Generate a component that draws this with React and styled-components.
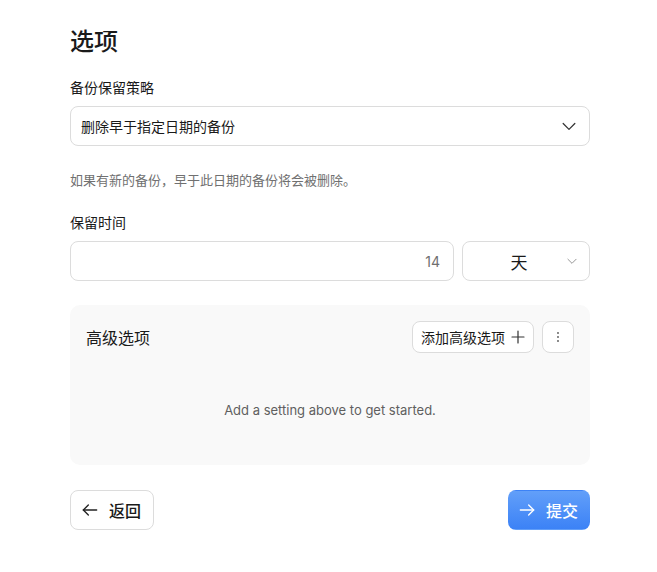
import React from "react";
import styled, { createGlobalStyle } from "styled-components";

const GlobalStyle = createGlobalStyle`
  body {
    margin: 0;
    background: #ffffff;
    font-family: Inter, "Noto Sans CJK SC", sans-serif;
    color: #1a1a1a;
  }
`;

const Page = styled.div`
  width: 520px;
  padding: 26px 0 40px 70px;
  display: flex;
  flex-direction: column;
`;

const Title = styled.h1`
  margin: 0 0 20px;
  font-size: 24px;
  line-height: 32px;
  font-weight: 500;
`;

const Label = styled.div`
  font-size: 14px;
  line-height: 20px;
  font-weight: 400;
  margin-bottom: 8px;
`;

const Field = styled.div`
  box-sizing: border-box;
  height: 40px;
  border: 1px solid #dcdcdc;
  border-radius: 8px;
  background: #fff;
  display: flex;
  align-items: center;
  padding: 0 ${p => p.$pad || 12}px;
  font-size: 14px;
  justify-content: ${p => p.$justify || "space-between"};
  flex: ${p => p.$flex || "none"};
  width: ${p => p.$width || "auto"};
`;

const Help = styled.p`
  margin: 24px 0 23px;
  font-size: 13px;
  line-height: 20px;
  color: #707070;
`;

const Row = styled.div`
  display: flex;
  gap: 8px;
`;

const NumberText = styled.span`
  color: #6f6f6f;
  font-size: 14px;
`;

const UnitText = styled.span`
  flex: 1;
  text-align: center;
  font-size: 17px;
`;

const Panel = styled.section`
  margin-top: 24px;
  background: #f9f9f9;
  border-radius: 10px;
  padding: 16px;
  height: 160px;
  box-sizing: border-box;
  display: flex;
  flex-direction: column;
`;

const PanelHead = styled.div`
  display: flex;
  align-items: center;
  justify-content: space-between;
`;

const PanelTitle = styled.div`
  font-size: 16px;
  font-weight: 400;
`;

const Tools = styled.div`
  display: flex;
  gap: 8px;
`;

const SmallButton = styled.button`
  box-sizing: border-box;
  height: 32px;
  min-width: 32px;
  padding: 0 ${p => (p.$icon ? 0 : 8)}px;
  border: 1px solid #dcdcdc;
  border-radius: 8px;
  background: #fff;
  font-family: inherit;
  font-size: 14px;
  color: #1a1a1a;
  display: flex;
  align-items: center;
  justify-content: center;
  gap: 6px;
`;

const Empty = styled.div`
  flex: 1;
  display: flex;
  align-items: center;
  justify-content: center;
  font-size: 13px;
  color: #5f5f5f;
  padding-top: 18px;
`;

const Footer = styled.div`
  margin-top: 25px;
  display: flex;
  justify-content: space-between;
`;

const NavButton = styled.button`
  box-sizing: border-box;
  height: 40px;
  padding: 0 ${p => (p.$primary ? 11 : 12)}px 0 ${p => (p.$primary ? 8 : 9)}px;
  border-radius: 8px;
  border: 1px solid ${p => (p.$primary ? "transparent" : "#dcdcdc")};
  background: ${p => (p.$primary ? "linear-gradient(#629ff9, #3c82f6)" : "#fff")};
  color: ${p => (p.$primary ? "#fff" : "#1a1a1a")};
  font-family: inherit;
  font-size: 16px;
  font-weight: 500;
  display: flex;
  align-items: center;
  gap: 9px;
`;

const Chevron = ({ size = 18, color = "#333" }) => (
  <svg width={size} height={size} viewBox="0 0 24 24" fill="none" stroke={color} strokeWidth="1.5" strokeLinecap="round" strokeLinejoin="round">
    <path d="M5 9l7 7 7-7" />
  </svg>
);

const Arrow = ({ dir, color }) => (
  <svg width="20" height="20" viewBox="0 0 24 24" fill="none" stroke={color} strokeWidth="1.6" strokeLinecap="round" strokeLinejoin="round">
    {dir === "left" ? (
      <>
        <path d="M20 12H4" />
        <path d="M10 6l-6 6 6 6" />
      </>
    ) : (
      <>
        <path d="M4 12h16" />
        <path d="M14 6l6 6-6 6" />
      </>
    )}
  </svg>
);

const Plus = () => (
  <svg width="14" height="14" viewBox="0 0 14 14" stroke="#333" strokeWidth="1.2" strokeLinecap="round">
    <path d="M7 1v12M1 7h12" />
  </svg>
);

const Dots = () => (
  <svg width="4" height="14" viewBox="0 0 4 14" fill="#555">
    <circle cx="2" cy="3" r="0.9" />
    <circle cx="2" cy="7" r="0.9" />
    <circle cx="2" cy="11" r="0.9" />
  </svg>
);

export default function App() {
  return (
    <>
      <GlobalStyle />
      <Page>
        <Title>选项</Title>
        <Label>备份保留策略</Label>
        <Field $pad={10}>
          <span>删除早于指定日期的备份</span>
          <Chevron size={20} />
        </Field>
        <Help>如果有新的备份，早于此日期的备份将会被删除。</Help>
        <Label>保留时间</Label>
        <Row>
          <Field $flex="1" $justify="flex-end" $pad={13}>
            <NumberText>14</NumberText>
          </Field>
          <Field $width="128px" $pad={10}>
            <UnitText>天</UnitText>
            <Chevron size={14} color="#888" />
          </Field>
        </Row>
        <Panel>
          <PanelHead>
            <PanelTitle>高级选项</PanelTitle>
            <Tools>
              <SmallButton>
                添加高级选项 <Plus />
              </SmallButton>
              <SmallButton $icon>
                <Dots />
              </SmallButton>
            </Tools>
          </PanelHead>
          <Empty>Add a setting above to get started.</Empty>
        </Panel>
        <Footer>
          <NavButton>
            <Arrow dir="left" color="#222" />
            返回
          </NavButton>
          <NavButton $primary>
            <Arrow dir="right" color="#fff" />
            提交
          </NavButton>
        </Footer>
      </Page>
    </>
  );
}
